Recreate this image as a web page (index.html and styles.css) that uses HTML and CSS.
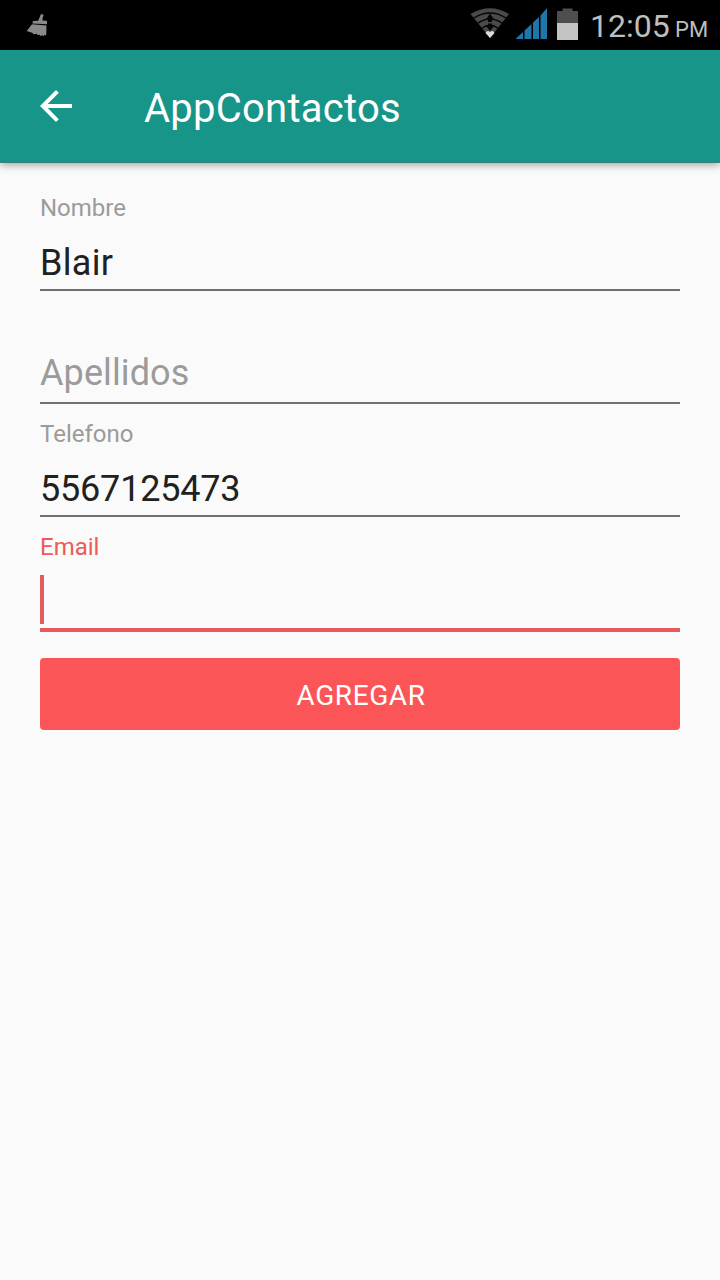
FILE: index.html
```html
<!DOCTYPE html>
<html lang="es">
<head>
  <title>AppContactos</title>
  <meta charset="UTF-8">
  <link rel="stylesheet" href="styles.css">
</head>
<body>
  <div class="status">
    <svg class="broom" width="24" height="28" viewBox="0 0 24 28">
      <path fill="#8a8a8a" d="M16 2l2.600.8-1.500 5.500 5 .8-.2 3.200L7.400 11.500l.6-2.500 5.200-.3zM7 12.300l14.500 1.200-.3 10-1.700-.8-.8 1.500-1.200-1-1.800.9-1.300-1.300-2 .3-.5-1.300-3.700.4-.5-1.300-6-1.800z"/>
    </svg>
    <div class="indicators">
      <svg width="110" height="36" viewBox="0 0 110 36">
        <!-- wifi -->
        <path fill="#4a4a4a" d="M.5 8Q20-3.500 39 8L20 32z"/>
        <g fill="none" stroke="#050505" stroke-width="1.300">
          <path d="M3 12.500Q20 1.500 37 12.500M7.500 17.500Q20 8.500 32.500 17.500M11.500 22.500Q20 16 28.500 22.500"/>
        </g>
        <path fill="#050505" d="M20 7.500l4 6h-2v2.500h-4v-2.500h-2zM18 17.500h4v2h2.500L20 25l-4.500-5.500H18z"/>
        <path fill="#ddd" d="M15.500 27q2-3.500 4.500-.8 2.500-2.700 4.500.8L20 32z"/>
        <!-- signal -->
        <path fill="#1f76a9" d="M45.500 33l7.500-7v7zM54.500 33v-8.500l7-6.500V33zM63 33V16.500l6-5.500v22zM70.500 33V9.500L77 2v31z"/>
        <!-- battery -->
        <path fill="#4e4e4e" d="M87 5h5.500V2.500h10V5h5.500v12H87z"/>
        <path fill="#c3c3c3" d="M87 17h21v17H87z"/>
      </svg>
      <span class="clock">12:05</span><span class="period">PM</span>
    </div>
  </div>
  <div class="toolbar">
    <svg width="32" height="32" viewBox="0 0 32 32">
      <path fill="#fff" d="M32 14H7.700L18.800 2.800 16 0 0 16l16 16 2.800-2.800L7.700 18H32z"/>
    </svg>
    <h1>AppContactos</h1>
  </div>
  <form class="contact">
    <div class="field">
      <label>Nombre</label>
      <div class="value">Blair</div>
    </div>
    <div class="field">
      <div class="value hint">Apellidos</div>
    </div>
    <div class="field">
      <label>Telefono</label>
      <div class="value phone">5567125473</div>
    </div>
    <div class="field active">
      <label>Email</label>
      <div class="caret"></div>
    </div>
    <button class="add" type="button">AGREGAR</button>
  </form>
</body>
</html>
```

FILE: styles.css
```css
* {
  box-sizing: border-box;
}
body {
  margin: 0;
  height: 1280px;
  overflow: hidden;
  background: #fafafa;
  font-family: Roboto, sans-serif;
  color: #212121;
}
.status {
  display: flex;
  justify-content: space-between;
  height: 50px;
  padding: 0 12px 0 25px;
  background: #000;
  color: #bebebe;
}
.broom {
  margin-top: 12px;
}
.indicators {
  display: flex;
  align-items: baseline;
}
.indicators svg {
  align-self: flex-start;
  margin: 6px 10px 0 0;
}
.clock {
  width: 80px;
  font-size: 32px;
  line-height: 52px;
}
.period {
  margin-left: 5px;
  width: 33px;
  font-size: 22px;
}
.toolbar {
  display: flex;
  align-items: center;
  height: 113px;
  padding: 0 40px;
  background: #169588;
  border-bottom: 1px solid #3f8079;
  box-shadow: 0 2px 8px rgba(0, 0, 0, 0.35);
}
h1 {
  margin: 4px 0 0 72px;
  font-size: 40px;
  font-weight: 400;
  letter-spacing: 0.25px;
  color: #fff;
}
.contact {
  padding: 15px 40px;
}
.field {
  display: flex;
  flex-direction: column;
  height: 113px;
  padding-top: 16px;
  border-bottom: 2px solid #707070;
}
label {
  font-size: 24px;
  line-height: 28px;
  color: #9b9b9b;
}
.value {
  margin-top: 20px;
  font-size: 36px;
  line-height: 42px;
  letter-spacing: 0.3px;
}
.hint {
  margin-top: 45px;
  letter-spacing: 0.1px;
  color: #9b9b9b;
}
.phone {
  letter-spacing: -0.2px;
}
.active {
  height: 115px;
  border-bottom: 4px solid #e95b5a;
}
.active label {
  color: #ed5a59;
}
.caret {
  width: 4px;
  height: 49px;
  margin-top: 14px;
  background: #e25d5b;
}
.add {
  display: block;
  width: 100%;
  height: 72px;
  margin-top: 26px;
  padding: 3px 0 0 2px;
  border: 0;
  border-radius: 4px;
  background: #fc5558;
  color: #fff;
  font-family: inherit;
  font-size: 28px;
  letter-spacing: 0.6px;
}
```
